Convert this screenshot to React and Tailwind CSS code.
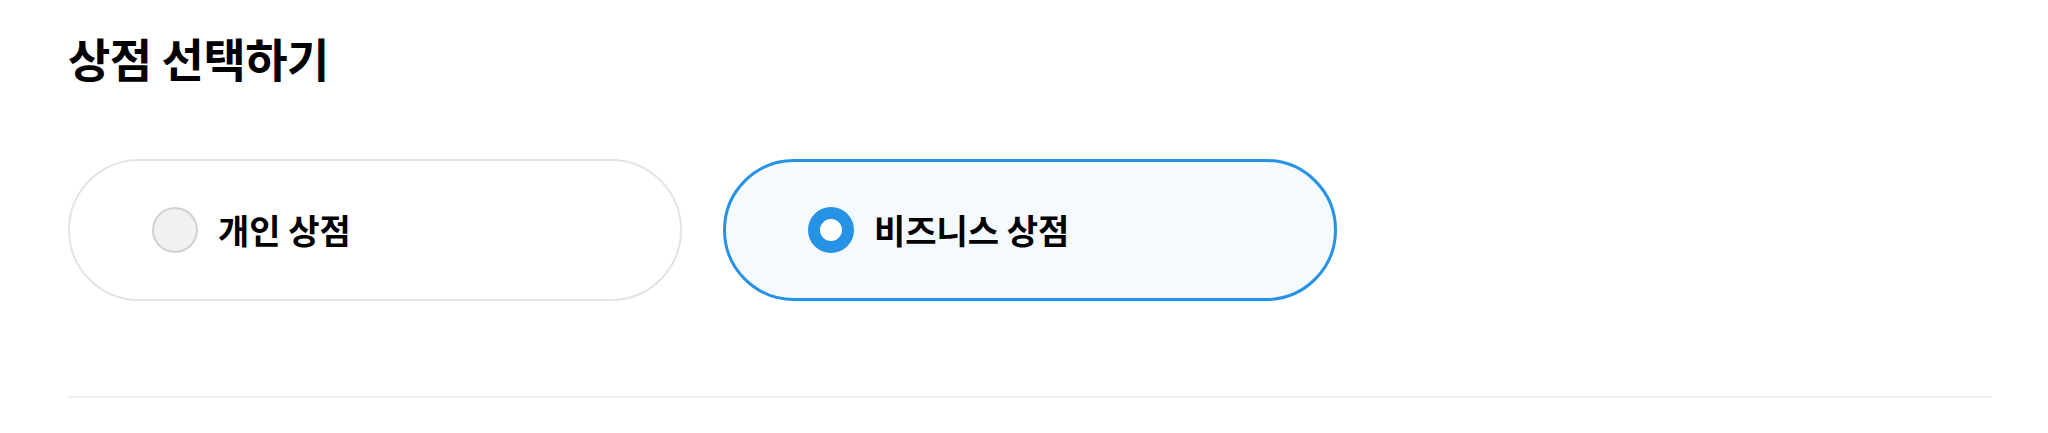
import { useState } from 'react'

const options = [
  { id: 'personal', label: '개인 상점' },
  { id: 'business', label: '비즈니스 상점' },
]

export default function App() {
  const [selected, setSelected] = useState('business')

  return (
    <div
      className="h-[433px] w-full bg-white pl-[68px] pt-[25px]"
      style={{ fontFamily: '"Noto Sans CJK KR", "Noto Sans", sans-serif' }}
    >
      {/* Title */}
      <h1 className="text-[46px] font-bold leading-[64px] tracking-[-0.5px] text-black">상점 선택하기</h1>

      {/* Store type options */}
      <div className="mt-[70px] flex gap-[41px]">
        {options.map((opt) => {
          const active = selected === opt.id
          return (
            <button
              key={opt.id}
              onClick={() => setSelected(opt.id)}
              className={`flex h-[142px] w-[614px] items-center gap-[20px] rounded-full pl-[82px] text-left ${
                active ? 'border-[3px] border-[#2592e6] bg-[#f5faff]' : 'border-2 border-[#e2e4e5] bg-white'
              }`}
            >
              {active ? (
                <span className="h-[46px] w-[46px] shrink-0 rounded-full border-[12px] border-[#2592e6] bg-white" />
              ) : (
                <span className="h-[46px] w-[46px] shrink-0 rounded-full border-2 border-[#cfd1d3] bg-[#f0f1f2]" />
              )}
              <span className="text-[34px] font-bold leading-none text-black">{opt.label}</span>
            </button>
          )
        })}
      </div>

      {/* Divider */}
      <div className="mt-[95px] h-[2px] w-[1924px] bg-[#eeeeee]" />
    </div>
  )
}
